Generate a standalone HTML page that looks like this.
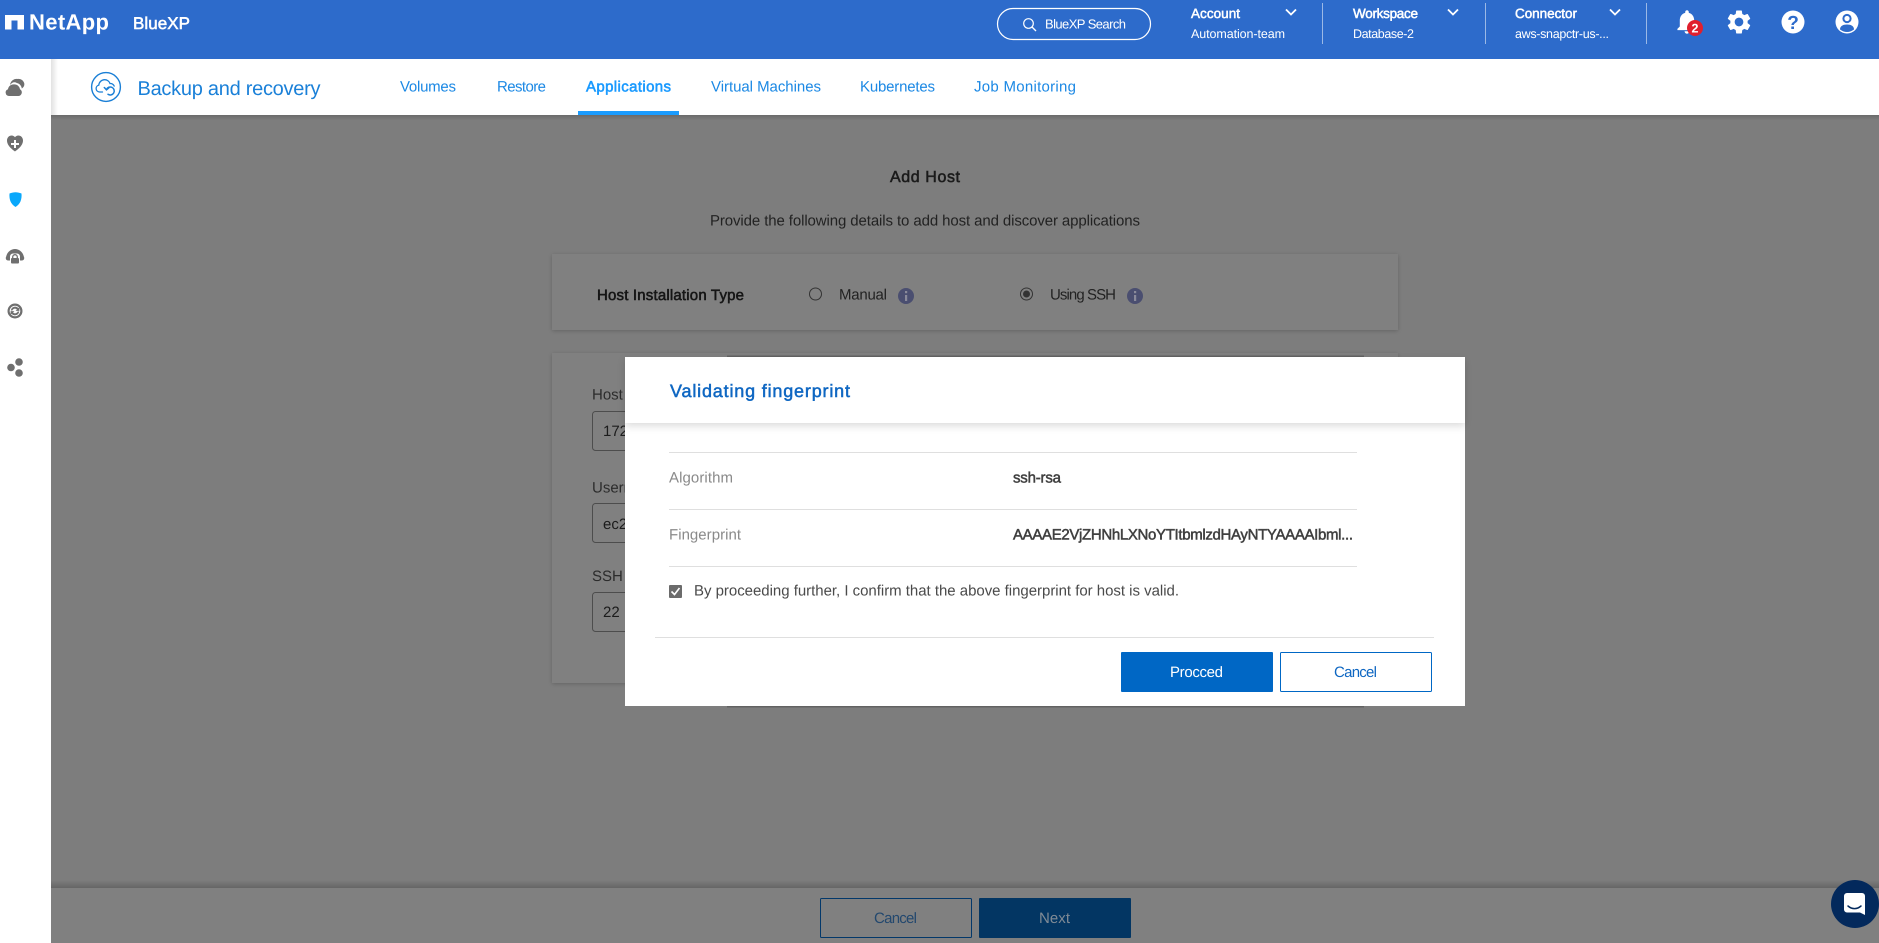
<!DOCTYPE html>
<html lang="en"><head><meta charset="utf-8"><title>Backup and recovery - BlueXP</title>
<style>
html,body{margin:0;padding:0;width:1879px;height:943px;overflow:hidden;background:#7d7d7d}
svg{display:block;position:absolute;left:0;top:0}
text{font-family:"Liberation Sans",sans-serif;white-space:pre;text-rendering:geometricPrecision}
</style></head><body>
<svg xmlns="http://www.w3.org/2000/svg" width="1879" height="943" viewBox="0 0 1879 943">
<defs>
<filter id="s1" x="-5%" y="-20%" width="110%" height="140%"><feDropShadow dx="0" dy="1" stdDeviation="2" flood-color="#000" flood-opacity=".2"/></filter>
<filter id="s2" x="-5%" y="-30%" width="110%" height="170%"><feDropShadow dx="0" dy="3" stdDeviation="4" flood-color="#000" flood-opacity=".14"/></filter>
<linearGradient id="gt" x1="0" y1="0" x2="0" y2="1"><stop offset="0" stop-color="#6a6a6a"/><stop offset="1" stop-color="#7d7d7d"/></linearGradient>
<linearGradient id="gf" x1="0" y1="0" x2="0" y2="1"><stop offset="0" stop-color="#7d7d7d"/><stop offset="1" stop-color="#656565"/></linearGradient>
<linearGradient id="gl" x1="0" y1="0" x2="1" y2="0"><stop offset="0" stop-color="#e2e2e2"/><stop offset="1" stop-color="#fff"/></linearGradient>
</defs>

<!-- dimmed page -->
<rect x="51" y="115" width="1828" height="828" fill="#7d7d7d"/>
<rect x="51" y="115" width="1828" height="5" fill="url(#gt)"/>
<text x="890" y="182" font-size="16" fill="#1b1b1b" stroke="#1b1b1b" stroke-width=".55" textLength="70">Add Host</text>
<text x="710" y="225.500" font-size="15" fill="#222" textLength="430">Provide the following details to add host and discover applications</text>

<rect x="552" y="254" width="846" height="76" fill="#808080" filter="url(#s1)"/>
<text x="597" y="300" font-size="15" fill="#161616" stroke="#161616" stroke-width=".55" textLength="147">Host Installation Type</text>
<circle cx="815.500" cy="294" r="6" fill="none" stroke="#333" stroke-width="1"/>
<text x="839" y="299.500" font-size="15" fill="#222" textLength="48">Manual</text>
<circle cx="906" cy="296" r="8" fill="#4a4e70"/>
<rect x="905" y="295" width="2.200" height="6" fill="#8a8a9a"/><rect x="905" y="291" width="2.200" height="2.200" fill="#8a8a9a"/>
<circle cx="1026.500" cy="294" r="6" fill="none" stroke="#333" stroke-width="1"/>
<circle cx="1026.500" cy="294" r="3.500" fill="#333"/>
<text x="1050" y="299.500" font-size="15" fill="#222" textLength="66">Using SSH</text>
<circle cx="1135" cy="296" r="8" fill="#4a4e70"/>
<rect x="1134" y="295" width="2.200" height="6" fill="#8a8a9a"/><rect x="1134" y="291" width="2.200" height="2.200" fill="#8a8a9a"/>

<rect x="552" y="353" width="846" height="330" fill="#808080" filter="url(#s1)"/>
<text x="592" y="399.500" font-size="15" fill="#2c2c2c">Host IP</text>
<rect x="592.500" y="411.500" width="120" height="39" rx="3" fill="none" stroke="#4d4d4d"/>
<text x="603" y="436" font-size="15" fill="#1c1c1c">172.30.0</text>
<text x="592" y="492.500" font-size="15" fill="#2c2c2c">Username</text>
<rect x="592.500" y="503.500" width="120" height="39" rx="3" fill="none" stroke="#4d4d4d"/>
<text x="603" y="529" font-size="15" fill="#1c1c1c">ec2-user</text>
<text x="592" y="581" font-size="15" fill="#2c2c2c">SSH Port</text>
<rect x="592.500" y="592.500" width="120" height="39" rx="3" fill="none" stroke="#4d4d4d"/>
<text x="603" y="617" font-size="15" fill="#1c1c1c">22</text>

<!-- footer -->
<rect x="51" y="880" width="1828" height="8" fill="url(#gf)"/>
<rect x="51" y="888" width="1828" height="55" fill="#808080"/>
<rect x="820.500" y="898.500" width="151" height="39" rx="1" fill="none" stroke="#03386a"/>
<text x="874" y="923" font-size="15" fill="#23486e" textLength="43">Cancel</text>
<rect x="979" y="898" width="152" height="40" rx="1" fill="#033663"/>
<text x="1039" y="923" font-size="15" fill="#7f8a95" textLength="31">Next</text>
<circle cx="1855" cy="904" r="24" fill="#03295c"/>
<path d="M1847 893h15a3 3 0 0 1 3 3v19l-5-2.500h-13a3 3 0 0 1-3-3v-13.500a3 3 0 0 1 3-3z" fill="#fff"/>
<path d="M1848 906c4 3.500 9 3.500 13 0" fill="none" stroke="#03295c" stroke-width="1.500" stroke-linecap="round"/>

<!-- sidebar -->
<rect x="0" y="59" width="51" height="884" fill="#fff"/>
<!-- cloud -->
<path d="M10 85c.5-4 4-6.500 7.500-6 2.500-.5 6 1 6.800 4.500.3 2.500-1 4-2.500 5-.3-3-2.500-5-5-5.500-2.500-1.500-5-.5-6.800 2z" fill="#6f6f6f"/>
<path d="M9 96a3.500 3.500 0 0 1-1-6.800c.5-3 3-5 6-4.800 2.800-.3 5.500 1.800 6 4.800 1.500.8 2 2.300 1.800 3.600-.3 1.800-1.500 3.200-3.300 3.200z" fill="#6f6f6f"/>
<!-- heart -->
<path d="M15 151.500c-2-1.600-8-5.500-8-11 0-3 2.200-5 4.600-5 1.400 0 2.600.6 3.400 1.800.8-1.200 2-1.800 3.400-1.800 2.400 0 4.600 2 4.600 5 0 5.500-6 9.400-8 11z" fill="#6f6f6f"/>
<path d="M14 140h2v3h3v2h-3v3h-2v-3h-3v-2h3z" fill="#fff"/>
<!-- shield -->
<path d="M9.500 193.500c2-.8 4-1.300 6-1.300s4 .5 6 1.300c.5 5.500-1 10.500-6 13.500-5-3-6.500-8-6-13.500z" fill="#0aa8fb"/>
<!-- cloud lock -->
<path d="M8 260.500c-2 0-2.800-2.400-1.800-4 .8-4 4.400-7.500 8.800-7.500s8 3.500 8.800 7.500c1 1.600.2 4-1.800 4z" fill="#6f6f6f"/>
<rect x="10" y="253.500" width="10" height="10" rx="3" fill="#fff"/>
<rect x="11" y="258" width="8" height="5.500" rx="1" fill="#6f6f6f"/>
<path d="M12.700 258.500v-1.500a2.300 2.300 0 0 1 4.600 0v1.500" fill="none" stroke="#6f6f6f" stroke-width="1.300"/>
<!-- sync -->
<circle cx="15" cy="311" r="6.400" fill="none" stroke="#6f6f6f" stroke-width="2.200"/>
<path d="M10.800 310.500a4.400 4.400 0 0 1 7.600-2.400l1-1v3.800h-3.800l1.300-1.300a2.700 2.700 0 0 0-4.600.9zM19.200 311.500a4.400 4.400 0 0 1-7.600 2.400l-1 1v-3.800h3.800l-1.300 1.300a2.700 2.700 0 0 0 4.600-.9z" fill="#6f6f6f"/>
<!-- nodes -->
<circle cx="19" cy="362" r="3.800" fill="#6f6f6f"/><circle cx="11" cy="367.500" r="3.800" fill="#6f6f6f"/><circle cx="19" cy="373" r="3.800" fill="#6f6f6f"/>

<!-- subnav -->
<rect x="51" y="59" width="1828" height="56" fill="#fff"/>
<rect x="51" y="59" width="7" height="56" fill="url(#gl)"/>
<circle cx="106" cy="87" r="14.400" fill="none" stroke="#1a7fd6" stroke-width="1.400"/>
<path d="M102.500 92h-3a3.500 3.500 0 0 1-.7-6.900c.3-3 2.800-5.400 5.800-5.400 2.500 0 4.600 1.600 5.400 3.800 1.600-.2 3.600.7 4.200 2.600" fill="none" stroke="#1a7fd6" stroke-width="1.300" stroke-linecap="round"/>
<path d="M106.500 89.500a4 4 0 1 1 1.500 4.800" fill="none" stroke="#1a7fd6" stroke-width="1.500" stroke-linecap="round"/>
<path d="M104.300 87.500l2.200 2.300 2.400-2" fill="none" stroke="#1a7fd6" stroke-width="1.500" stroke-linecap="round"/>
<text x="137.500" y="95" font-size="20" fill="#1a80d8" textLength="183">Backup and recovery</text>
<g font-size="15" fill="#1b88e4">
<text x="400" y="91.500" textLength="56">Volumes</text>
<text x="497" y="91.500" textLength="49">Restore</text>
<text x="586" y="91.500" fill="#1a9aff" stroke="#1a9aff" stroke-width=".55" textLength="85">Applications</text>
<text x="711" y="91.500" textLength="110">Virtual Machines</text>
<text x="860" y="91.500" textLength="75">Kubernetes</text>
<text x="974" y="91.500" textLength="102">Job Monitoring</text>
</g>
<rect x="578" y="111" width="101" height="4" fill="#1a9cff"/>

<!-- header -->
<rect x="0" y="0" width="1879" height="59" fill="#2d6bcb"/>
<path d="M5 15h19v14.500h-6.500v-9h-6v9h-6.500z" fill="#fff"/>
<text x="29" y="29.500" font-size="22" font-weight="700" fill="#fff" textLength="80">NetApp</text>
<text x="133" y="29" font-size="17" fill="#fff" stroke="#fff" stroke-width=".55" textLength="57">BlueXP</text>
<rect x="997.500" y="8.500" width="153" height="31" rx="15.500" fill="none" stroke="#fff" stroke-width="1.200"/>
<circle cx="1028.500" cy="23.500" r="4.800" fill="none" stroke="#fff" stroke-width="1.200"/>
<path d="M1032 27l4 4" stroke="#fff" stroke-width="1.300"/>
<text x="1045" y="28.500" font-size="13" fill="#fff" textLength="81">BlueXP Search</text>
<g fill="#fff">
<g font-size="13.500" stroke="#fff" stroke-width=".5">
<text x="1191" y="18" textLength="49">Account</text>
<text x="1353" y="18" textLength="65">Workspace</text>
<text x="1515" y="18" textLength="62">Connector</text>
</g>
<g font-size="12.500">
<text x="1191" y="38" textLength="94">Automation-team</text>
<text x="1353" y="38" textLength="61">Database-2</text>
<text x="1515" y="38" textLength="94">aws-snapctr-us-...</text>
</g>
</g>
<g fill="none" stroke="#fff" stroke-width="1.800">
<path d="M1286 9.500l5 5 5-5M1448 9.500l5 5 5-5M1610 9.500l5 5 5-5"/>
</g>
<g fill="#9bb9e6"><rect x="1322" y="3" width="1" height="41"/><rect x="1485" y="3" width="1" height="41"/><rect x="1646" y="3" width="1" height="41"/></g>
<path transform="translate(1672.600 7.300) scale(1.200)" d="M12 22c1.100 0 2-.9 2-2h-4c0 1.100.9 2 2 2zm6-6v-5c0-3.070-1.630-5.640-4.500-6.320V4c0-.83-.67-1.500-1.500-1.500s-1.500.67-1.500 1.500v.68C7.640 5.360 6 7.920 6 11v5l-2 2v1h16v-1l-2-2z" fill="#fff"/>
<circle cx="1695" cy="28" r="8" fill="#e01f2d"/>
<text x="1695" y="32.500" font-size="12.500" font-weight="700" fill="#fff" text-anchor="middle">2</text>
<path transform="translate(1724.600 7.600) scale(1.200)" d="M19.140 12.940c.04-.3.06-.61.06-.94 0-.32-.02-.64-.07-.94l2.030-1.580a.49.49 0 0 0 .12-.61l-1.920-3.320a.488.488 0 0 0-.59-.22l-2.390.96c-.5-.38-1.030-.7-1.620-.94l-.36-2.540a.484.484 0 0 0-.48-.41h-3.840c-.24 0-.43.17-.47.41l-.36 2.540c-.59.24-1.130.57-1.620.94l-2.390-.96c-.22-.08-.47 0-.59.22L2.740 8.870c-.12.21-.08.47.12.61l2.030 1.580c-.05.3-.09.63-.09.94s.02.64.07.94l-2.030 1.580a.49.49 0 0 0-.12.61l1.920 3.320c.12.22.37.29.59.22l2.390-.96c.5.38 1.030.7 1.620.94l.36 2.540c.05.24.24.41.48.41h3.840c.24 0 .44-.17.47-.41l.36-2.540c.59-.24 1.130-.56 1.620-.94l2.390.96c.22.08.47 0 .59-.22l1.920-3.320c.12-.22.07-.47-.12-.61l-2.010-1.580zM12 15.600c-1.980 0-3.600-1.620-3.600-3.600s1.620-3.600 3.600-3.600 3.600 1.620 3.600 3.600-1.620 3.600-3.600 3.600z" fill="#fff"/>
<circle cx="1793" cy="22" r="11.500" fill="#fff"/>
<text x="1793" y="29" font-size="19" font-weight="700" fill="#2d6bcb" text-anchor="middle">?</text>
<circle cx="1847" cy="22" r="11.500" fill="#fff"/>
<circle cx="1847" cy="18.500" r="3.600" fill="none" stroke="#2d6bcb" stroke-width="2"/>
<path d="M1840 29.500c0-3.500 3-5 7-5s7 1.500 7 5c-2 1.500-4.500 2.500-7 2.500s-5-1-7-2.500z" fill="#2d6bcb"/>

<!-- modal -->
<rect x="727" y="355.500" width="637" height="352" fill="#626262"/>
<rect x="625" y="357" width="840" height="349" fill="#fff"/>
<rect x="625" y="357" width="840" height="66" fill="#fff" filter="url(#s2)"/>
<text x="670" y="397" font-size="18" fill="#0f67c2" stroke="#0f67c2" stroke-width=".5" textLength="180">Validating fingerprint</text>
<g fill="#dfdfdf">
<rect x="669" y="452" width="688" height="1"/><rect x="669" y="509" width="688" height="1"/><rect x="669" y="566" width="688" height="1"/>
<rect x="655" y="637" width="779" height="1"/>
</g>
<text x="669" y="482.500" font-size="15" fill="#8a8a8a" textLength="64">Algorithm</text>
<text x="1013" y="482.500" font-size="15" fill="#3f3f3f" stroke="#3f3f3f" stroke-width=".5" textLength="48">ssh-rsa</text>
<text x="669" y="539.500" font-size="15" fill="#8a8a8a" textLength="72">Fingerprint</text>
<text x="1013" y="539.500" font-size="15" fill="#3f3f3f" stroke="#3f3f3f" stroke-width=".5" textLength="340">AAAAE2VjZHNhLXNoYTItbmlzdHAyNTYAAAAIbml...</text>
<rect x="669" y="585" width="13" height="13" rx="1" fill="#6b6b6b"/>
<path d="M671.500 591.500l3 3 5-6.500" fill="none" stroke="#fff" stroke-width="1.600"/>
<text x="694" y="595.500" font-size="15" fill="#4a4a4a" textLength="485">By proceeding further, I confirm that the above fingerprint for host is valid.</text>
<rect x="1121" y="652" width="152" height="40" rx="1" fill="#0067c5"/>
<text x="1170" y="677" font-size="15" fill="#fff" textLength="53">Procced</text>
<rect x="1280.500" y="652.500" width="151" height="39" rx="1" fill="#fff" stroke="#0067c5"/>
<text x="1334" y="677" font-size="15" fill="#0f67c2" textLength="43">Cancel</text>
</svg>
</body></html>
